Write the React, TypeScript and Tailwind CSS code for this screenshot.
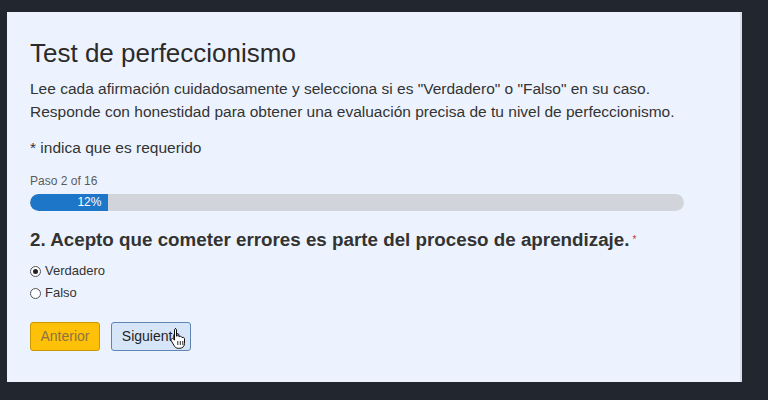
import { useState } from 'react'

const options = ['Verdadero', 'Falso']

function ProgressBar({ step, total, percent }: { step: number, total: number, percent: number }) {
  return (
    <div className="mt-[14px] w-[654px]">
      <p className="text-[12px] leading-4 text-[#5a5a5a]">Paso {step} of {total}</p>
      <div className="mt-[5px] h-[17px] w-full rounded-full bg-[#d1d5db] overflow-hidden">
        <div
          className="h-full rounded-l-full bg-[#1e76c8] text-white text-[12px] leading-[17px] text-right pr-[7px]"
          style={{ width: `${percent}%` }}
        >
          {percent}%
        </div>
      </div>
    </div>
  )
}

function HandCursor() {
  // pointer cursor sitting over the Siguiente button
  return (
    <svg width="17" height="22" viewBox="0 0 17 22" className="absolute left-[59px] top-[5px]">
      <path
        d="M5 1.5c.9 0 1.5.7 1.5 1.5v6.2c.3-.4.8-.6 1.3-.6.8 0 1.4.5 1.5 1.2.3-.3.8-.5 1.2-.5.8 0 1.4.6 1.5 1.3.3-.2.6-.3 1-.3.9 0 1.5.7 1.5 1.6v4.6c0 2.7-2 4.8-4.6 4.8H8.2c-1.5 0-2.8-.7-3.6-1.9L1.3 13.8c-.5-.7-.3-1.6.4-2 .6-.4 1.4-.3 1.9.3l.9 1.1V3c0-.8.6-1.5 1.5-1.5z"
        fill="#ffffff"
        stroke="#111111"
        strokeWidth="1"
      />
      <path d="M7.8 14v4M10.3 14v4M12.8 14v4" stroke="#111111" strokeWidth="0.9" />
    </svg>
  )
}

export default function App() {
  const [answer, setAnswer] = useState('Verdadero')

  return (
    <div className="w-[768px] h-[400px] bg-[#22262f] pt-[12px] pl-[7px] font-['Liberation_Sans',Arial,sans-serif]">
      <div className="w-[735px] h-[370px] bg-[#edf3fe] border-r-2 border-[#d8dde6] pl-[23px] pt-[26px] text-[#333333]">
        <h1 className="text-[26px] leading-[30px] text-[#2b2b2b]">Test de perfeccionismo</h1>
        <p className="mt-[9px] text-[15.5px] leading-[23px]">
          Lee cada afirmación cuidadosamente y selecciona si es "Verdadero" o "Falso" en su caso.
          <br />
          Responde con honestidad para obtener una evaluación precisa de tu nivel de perfeccionismo.
        </p>
        <p className="mt-[13px] text-[15.5px] leading-[23px]">* indica que es requerido</p>

        <ProgressBar step={2} total={16} percent={12} />

        <h2 className="mt-[16px] text-[18.8px] leading-[26px] font-bold text-[#333333]">
          2. Acepto que cometer errores es parte del proceso de aprendizaje.
          <span className="ml-[3px] align-top text-[10px] text-[#c0392b] font-normal">*</span>
        </h2>

        <div className="mt-[10px] flex flex-col gap-[6px]">
          {options.map((opt) => (
            <label key={opt} className="flex items-center gap-[4px] text-[13px] leading-4 text-[#333333]">
              <span
                className="w-[11px] h-[11px] rounded-full border border-[#555555] bg-white flex items-center justify-center"
                onClick={() => setAnswer(opt)}
              >
                {answer === opt ? <span className="w-[5px] h-[5px] rounded-full bg-[#222222]" /> : null}
              </span>
              {opt}
            </label>
          ))}
        </div>

        <div className="mt-[21px] flex gap-[11px]">
          <button className="h-[29px] w-[70px] rounded-[3px] border border-[#c99700] bg-[#ffc107] text-[14px] text-[#8c7440]">
            Anterior
          </button>
          <div className="relative">
            <button className="h-[29px] w-[80px] rounded-[3px] border border-[#5f86b3] bg-[#d6e5f8] text-[14px] text-[#1f1f1f]">
              Siguiente
            </button>
            <HandCursor />
          </div>
        </div>
      </div>
    </div>
  )
}
